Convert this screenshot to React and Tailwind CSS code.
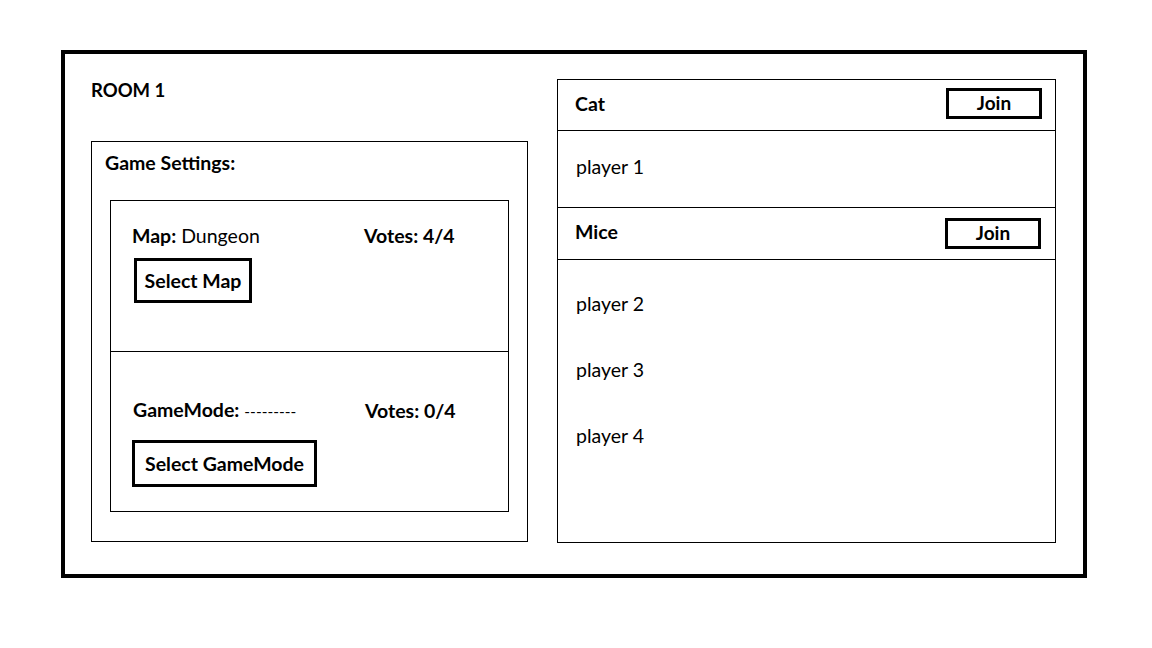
import React from "react";

const font = { fontFamily: "Lato, 'Open Sans', sans-serif" };

function BoxButton({ children, className }) {
  return (
    <button
      className={
        "border-[3px] border-black bg-white font-bold text-black flex items-center justify-center " +
        className
      }
    >
      {children}
    </button>
  );
}

function SettingRow({ label, value, votes, button, btnClass, valueClass }) {
  return (
    <div>
      <div className="flex items-center leading-[24px]">
        <div className="w-[232px] text-[19.5px]">
          <span className="font-bold">{label}</span>{" "}
          <span className={valueClass}>{value}</span>
        </div>
        <div className="text-[19.5px] font-bold">{votes}</div>
      </div>
      <BoxButton className={btnClass}>{button}</BoxButton>
    </div>
  );
}

function TeamHeader({ name, className, labelClass, btnClass }) {
  return (
    <div className={"flex items-start justify-between pl-[17px] " + className}>
      <span className={"text-[19.5px] font-bold " + labelClass}>{name}</span>
      <BoxButton className={"w-[96px] h-[31px] text-[19px] " + btnClass}>Join</BoxButton>
    </div>
  );
}

export default function App() {
  const mice = ["player 2", "player 3", "player 4"];
  return (
    <div className="w-[1152px] h-[648px] bg-white text-black pt-[50px] pl-[61px]" style={font}>
      <div className="w-[1026px] h-[528px] border-4 border-black flex pl-[26px]">
        {/* left: room + settings */}
        <div className="w-[437px] pt-[24px]">
          <h1 className="text-[18.5px] font-bold leading-[24px]">ROOM 1</h1>
          <div className="mt-[39px] h-[401px] border border-black pt-[9px]">
            <h2 className="pl-[13px] text-[19.5px] font-bold leading-[24px]">Game Settings:</h2>
            <div className="ml-[18px] mt-[25px] w-[399px] h-[312px] border border-black flex flex-col">
              <div className="h-[151px] border-b border-black pl-[21px] pt-[23px]">
                <SettingRow
                  label="Map:"
                  value="Dungeon"
                  votes="Votes: 4/4"
                  button="Select Map"
                  btnClass="mt-[10px] ml-[2px] w-[118px] h-[45px] text-[19.5px]"
                />
              </div>
              <div className="flex-1 pl-[22px] pt-[46px]">
                <SettingRow
                  label="GameMode:"
                  value="---------"
                  valueClass="text-[15.5px]"
                  votes="Votes: 0/4"
                  button="Select GameMode"
                  btnClass="mt-[17px] -ml-[1px] w-[185px] h-[47px] text-[19.5px]"
                />
              </div>
            </div>
          </div>
        </div>

        {/* right: teams */}
        <div className="ml-[29px] mt-[25px] w-[499px] h-[464px] border border-black flex flex-col">
          <TeamHeader
            name="Cat"
            className="h-[50px] pt-[8px] pr-[13px]"
            labelClass="leading-[31px]"
          />
          <div className="h-[78px] border-t border-b border-black pl-[18px] pt-[24px] text-[19.5px] leading-[24px]">
            player 1
          </div>
          <TeamHeader
            name="Mice"
            className="h-[51px] pt-[10px] pr-[14px]"
            labelClass="leading-[27px]"
          />
          <div className="flex-1 border-t border-black pl-[18px] pt-[32px] flex flex-col gap-[42px] text-[19.5px]">
            {mice.map((p) => (
              <div key={p} className="leading-[24px]">
                {p}
              </div>
            ))}
          </div>
        </div>
      </div>
    </div>
  );
}
